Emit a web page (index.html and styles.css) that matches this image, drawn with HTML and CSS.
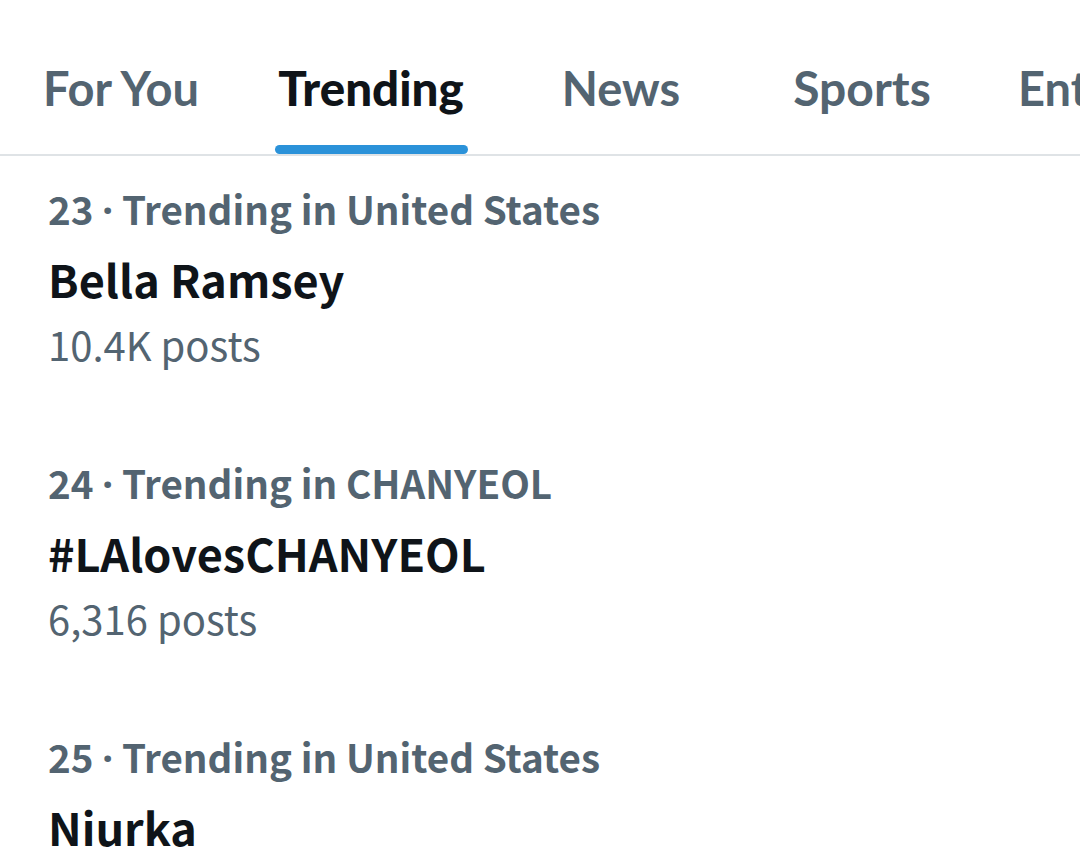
FILE: index.html
```html
<!DOCTYPE html>
<html>
<head>
    <title>Explore</title>
    <link rel="stylesheet" href="styles.css">
</head>
<body>
    <div class="tabs">
        <div class="tab"><span>For You</span></div>
        <div class="tab active"><span>Trending</span></div>
        <div class="tab"><span>News</span></div>
        <div class="tab narrow"><span>Sports</span></div>
        <div class="tab last"><span>Entertainment</span></div>
    </div>

    <div class="trends">
        <div class="trend">
            <div class="trend-meta">23 <span class="dot">·</span> Trending in United States</div>
            <div class="trend-name">Bella Ramsey</div>
            <div class="trend-count">10.4K posts</div>
        </div>
        <div class="trend">
            <div class="trend-meta">24 <span class="dot">·</span> Trending in CHANYEOL</div>
            <div class="trend-name">#LAlovesCHANYEOL</div>
            <div class="trend-count">6,316 posts</div>
        </div>
        <div class="trend">
            <div class="trend-meta">25 <span class="dot">·</span> Trending in United States</div>
            <div class="trend-name">Niurka</div>
        </div>
    </div>
</body>
</html>
```
FILE: styles.css
```css
body {
    margin: 0;
    background: #fff;
    font-family: 'Noto Sans CJK SC', 'Noto Sans', sans-serif;
    color: #0f1419;
    overflow: hidden;
    width: 1080px;
    height: 858px;
}

.tabs {
    display: flex;
    height: 154px;
    border-bottom: 2px solid #dfe3e6;
    margin-left: -4px;
    overflow: hidden;
}

.tab {
    flex: 0 0 250px;
    display: flex;
    justify-content: center;
    align-items: flex-start;
    font-family: Lato, 'Noto Sans', sans-serif;
    font-size: 47px;
    font-weight: 700;
    color: #536471;
    white-space: nowrap;
}

.tab.narrow {
    flex-basis: 232px;
    font-size: 48px;
}

.tab.last {
    justify-content: flex-start;
    padding-left: 40px;
}

.tab span {
    position: relative;
    padding-top: 60px;
    padding-bottom: 38px;
    line-height: 56px;
}

.tab.active {
    color: #0f1419;
    font-weight: 900;
    font-size: 47.5px;
}

.tab.active span::after {
    content: "";
    position: absolute;
    left: -3px;
    right: -4px;
    bottom: 0;
    height: 9px;
    border-radius: 5px;
    background: #2b92d9;
}

.trends {
    padding-left: 48px;
}

.trend {
    height: 274px;
    padding-top: 28px;
    box-sizing: border-box;
}

.trend-meta {
    font-size: 38.6px;
    font-weight: 700;
    color: #536471;
    line-height: 48px;
}

.dot {
    font-family: 'Noto Sans', sans-serif;
}

.trend-name {
    font-size: 45px;
    font-weight: 700;
    margin-top: 20px;
    line-height: 50px;
}

.trend-count {
    font-size: 40px;
    color: #536471;
    margin-top: 16px;
    line-height: 48px;
}
```
